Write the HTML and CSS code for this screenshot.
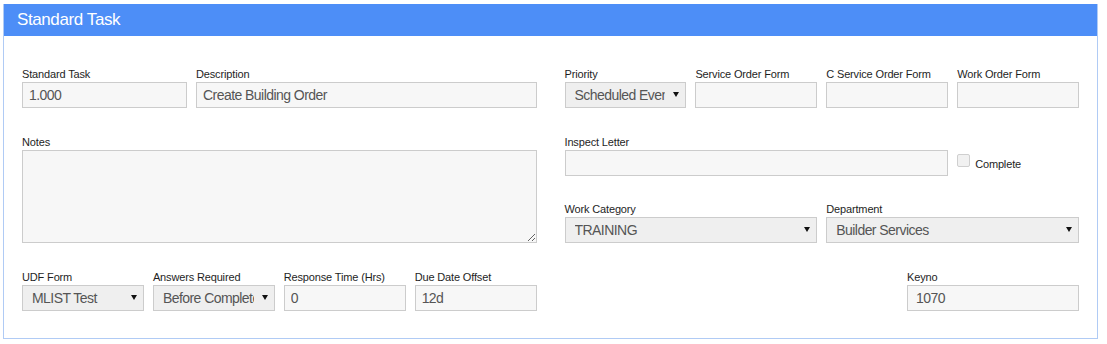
FILE: index.html
```html
<!DOCTYPE html>
<html lang="en">
<head>
<meta charset="utf-8">
<title>Standard Task</title>
<link rel="stylesheet" href="styles.css">
</head>
<body>
<div class="panel">
  <div class="panel-heading">Standard Task</div>
  <div class="panel-body">
    <div class="top">
      <div class="half">
        <div class="row row-task">
          <div class="field"><label>Standard Task</label><input class="ctl" value="1.000"></div>
          <div class="field"><label>Description</label><input class="ctl" value="Create Building Order"></div>
        </div>
        <div class="row">
          <div class="field"><label>Notes</label><textarea class="ctl notes"></textarea></div>
        </div>
      </div>
      <div class="half">
        <div class="row quad">
          <div class="field"><label>Priority</label>
            <div class="select"><select class="ctl"><option>Scheduled Event</option></select></div>
          </div>
          <div class="field"><label>Service Order Form</label><input class="ctl" value=""></div>
          <div class="field"><label>C Service Order Form</label><input class="ctl" value=""></div>
          <div class="field"><label>Work Order Form</label><input class="ctl" value=""></div>
        </div>
        <div class="row quad">
          <div class="field span3"><label>Inspect Letter</label><input class="ctl" value=""></div>
          <div class="check-cell">
            <input type="checkbox" class="check" disabled>
            <span class="check-label">Complete</span>
          </div>
        </div>
        <div class="row duo tight">
          <div class="field"><label>Work Category</label>
            <div class="select"><select class="ctl"><option>TRAINING</option></select></div>
          </div>
          <div class="field"><label>Department</label>
            <div class="select"><select class="ctl"><option>Builder Services</option></select></div>
          </div>
        </div>
      </div>
    </div>
    <div class="bottom">
      <div class="row quad">
        <div class="field"><label>UDF Form</label>
          <div class="select"><select class="ctl"><option>MLIST Test</option></select></div>
        </div>
        <div class="field"><label>Answers Required</label>
          <div class="select"><select class="ctl"><option>Before Complete</option></select></div>
        </div>
        <div class="field"><label>Response Time (Hrs)</label><input class="ctl" value="0"></div>
        <div class="field"><label>Due Date Offset</label><input class="ctl" value="12d"></div>
      </div>
      <div class="row end">
        <div class="field keyno"><label>Keyno</label><input class="ctl keyno-input" value="1070"></div>
      </div>
    </div>
  </div>
</div>
</body>
</html>
```
FILE: styles.css
```css
* { box-sizing: border-box; }

body {
  margin: 0;
  padding: 4px 0 0 3px;
  background: #ffffff;
  font-family: "Liberation Sans", Arial, sans-serif;
}

.panel {
  width: 1095px;
  border: 1px solid #b0cbf5;
  border-top: none;
  background: #ffffff;
}

.panel-heading {
  height: 32px;
  line-height: 31px;
  padding-left: 13px;
  background: #4d8ef7;
  color: #ffffff;
  font-size: 17px;
  letter-spacing: -0.4px;
}

.panel-body {
  padding: 31px 18px 27px 18px;
}

.top,
.bottom {
  display: grid;
  grid-template-columns: 1fr 1fr;
  column-gap: 28px;
}

.bottom { margin-top: 27px; }

.half {
  display: flex;
  flex-direction: column;
  gap: 27px;
}

.tight { margin-top: -1px; }

.row { display: grid; column-gap: 9px; }
.row-task { grid-template-columns: 165px 1fr; }
.quad { grid-template-columns: repeat(4, 1fr); }
.duo { grid-template-columns: 1fr 1fr; }
.span3 { grid-column: span 3; }
.end { display: flex; justify-content: flex-end; }

.field { min-width: 0; }

.field label {
  display: block;
  font-size: 11px;
  line-height: 14px;
  letter-spacing: -0.15px;
  margin-bottom: 1px;
  color: #1e1e1e;
  white-space: nowrap;
}

.ctl {
  display: block;
  width: 100%;
  height: 26px;
  margin: 0;
  border: 1px solid #cccccc;
  border-radius: 0;
  background: #f7f7f7;
  color: #555555;
  font-family: "Liberation Sans", Arial, sans-serif;
  font-size: 14px;
  letter-spacing: -0.55px;
  padding: 0 6px;
  outline: none;
}

.notes {
  height: 93px;
  resize: vertical;
  padding: 4px 6px;
}

.select { position: relative; }

.select select {
  -webkit-appearance: none;
  appearance: none;
  background: #efefef;
  padding: 0 20px 0 9px;
}

.select::after {
  content: "";
  position: absolute;
  right: 7px;
  top: 10px;
  border-left: 3px solid transparent;
  border-right: 3px solid transparent;
  border-top: 5px solid #111111;
  pointer-events: none;
}

.check-cell {
  display: flex;
  align-items: flex-start;
  padding-top: 19px;
}

.check {
  -webkit-appearance: none;
  appearance: none;
  width: 13px;
  height: 13px;
  margin: 0 5px 0 0;
  border: 1px solid #cfcfcf;
  border-radius: 2px;
  background: #f1f1f1;
}

.check-label {
  margin-top: 3px;
  font-size: 11px;
  line-height: 14px;
  letter-spacing: -0.15px;
  color: #1e1e1e;
}

.keyno { width: 172px; }
.keyno-input { padding-left: 8px; }
```
